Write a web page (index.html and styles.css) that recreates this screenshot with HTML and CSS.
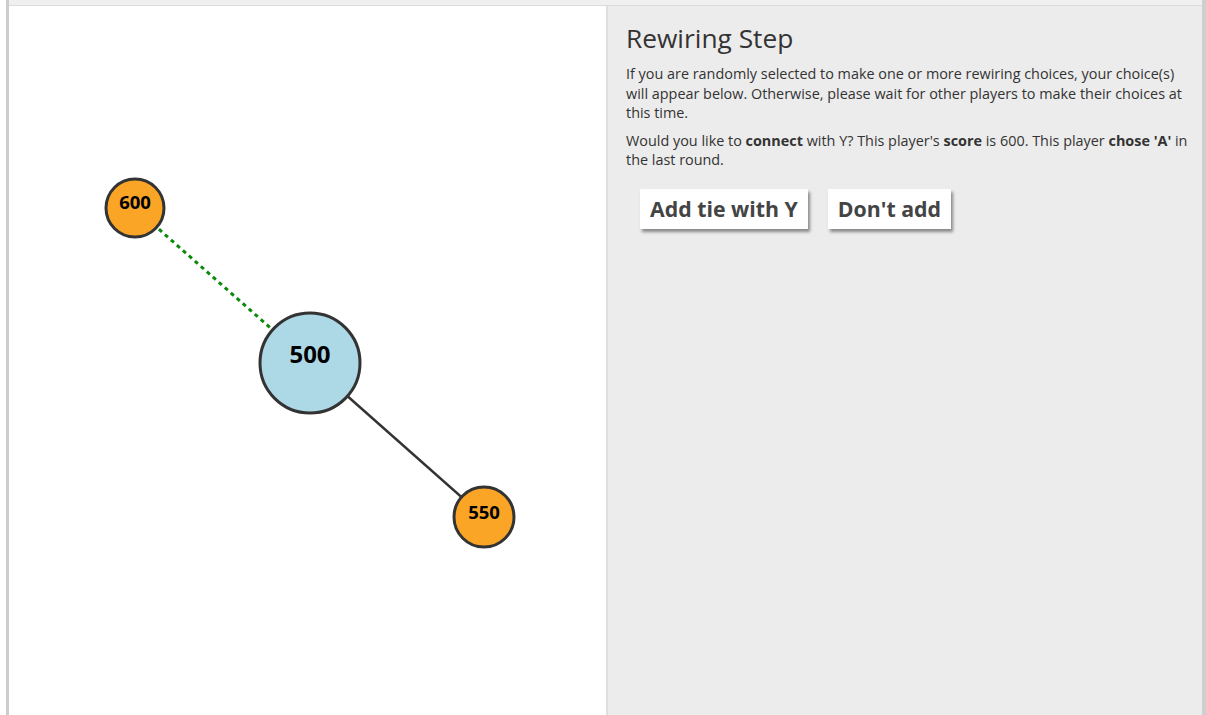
FILE: index.html
```html
<!DOCTYPE html>
<html lang="en">
<head>
<meta charset="utf-8">
<title>Rewiring Step</title>
<link rel="stylesheet" href="styles.css">
</head>
<body>
<div class="frame">
  <div class="topband"></div>
  <div class="panels">
    <section class="graph-panel">
      <svg class="graph" width="597" height="709" viewBox="0 0 597 709">
        <!-- edges -->
        <line class="edge-proposed" x1="126" y1="202" x2="301" y2="357"/>
        <line class="edge" x1="301" y1="357" x2="475" y2="511"/>
        <!-- nodes -->
        <g class="node neighbor">
          <circle cx="126" cy="202" r="29"/>
          <text x="126" y="203">600</text>
        </g>
        <g class="node self">
          <circle cx="301" cy="357" r="50"/>
          <text x="301" y="357">500</text>
        </g>
        <g class="node neighbor">
          <circle cx="475" cy="511" r="30"/>
          <text x="475" y="513">550</text>
        </g>
      </svg>
    </section>
    <section class="side-panel">
      <h2 class="title">Rewiring Step</h2>
      <p class="text">If you are randomly selected to make one or more rewiring choices, your choice(s) will appear below. Otherwise, please wait for other players to make their choices at this time.</p>
      <p class="text">Would you like to <b>connect</b> with Y? This player's <b>score</b> is 600. This player <b>chose 'A'</b> in the last round.</p>
      <div class="choices">
        <button class="choice">Add tie with Y</button>
        <button class="choice">Don't add</button>
      </div>
    </section>
  </div>
</div>
</body>
</html>
```

FILE: styles.css
```css
html, body {
  margin: 0;
  padding: 0;
  background: #ffffff;
  height: 100%;
  overflow: hidden;
}

body {
  font-family: "Open Sans", "Liberation Sans", sans-serif;
  color: #333333;
}

.frame {
  margin-left: 6px;
  width: 1193px;
  height: 715px;
  border-left: 3px solid #cdcdcd;
  border-right: 4px solid #cfcfcf;
  display: flex;
  flex-direction: column;
}

.topband {
  height: 5px;
  background: #f0f0f0;
  border-bottom: 1px solid #dcdcdc;
  flex: none;
}

.panels {
  flex: 1;
  display: flex;
  min-height: 0;
}

.graph-panel {
  width: 597px;
  flex: none;
  background: #ffffff;
}

.graph {
  display: block;
}

.edge-proposed {
  stroke: #0a8a0a;
  stroke-width: 3;
  stroke-dasharray: 4 4;
}

.edge {
  stroke: #333333;
  stroke-width: 2.5;
}

.node circle {
  stroke: #333333;
  stroke-width: 3;
}

.node.neighbor circle {
  fill: #fba527;
}

.node.self circle {
  fill: #add8e6;
}

.node text {
  font-family: "Open Sans", "Liberation Sans", sans-serif;
  font-weight: 700;
  fill: #000000;
  text-anchor: middle;
}

.node.neighbor text {
  font-size: 18.5px;
}

.node.self text {
  font-size: 24px;
}

.side-panel {
  flex: 1;
  background: #ececec;
  border-left: 2px solid #dedede;
  padding: 14px 11px 0 18px;
}

.title {
  margin: 0 0 8px 0;
  font-size: 26.3px;
  font-weight: 400;
  line-height: 36px;
  color: #333333;
}

.text {
  margin: 0 0 8px 0;
  font-size: 14.4px;
  line-height: 19.5px;
}

.text b {
  font-weight: 700;
}

.choices {
  display: flex;
  gap: 20px;
  padding: 11px 0 0 14px;
}

.choice {
  font-family: "Open Sans", "Liberation Sans", sans-serif;
  font-weight: 700;
  font-size: 21.3px;
  color: #444444;
  background: #ffffff;
  border: none;
  height: 40px;
  padding: 0 10px;
  box-shadow: 2px 3px 3px #888888;
  cursor: pointer;
}
```
